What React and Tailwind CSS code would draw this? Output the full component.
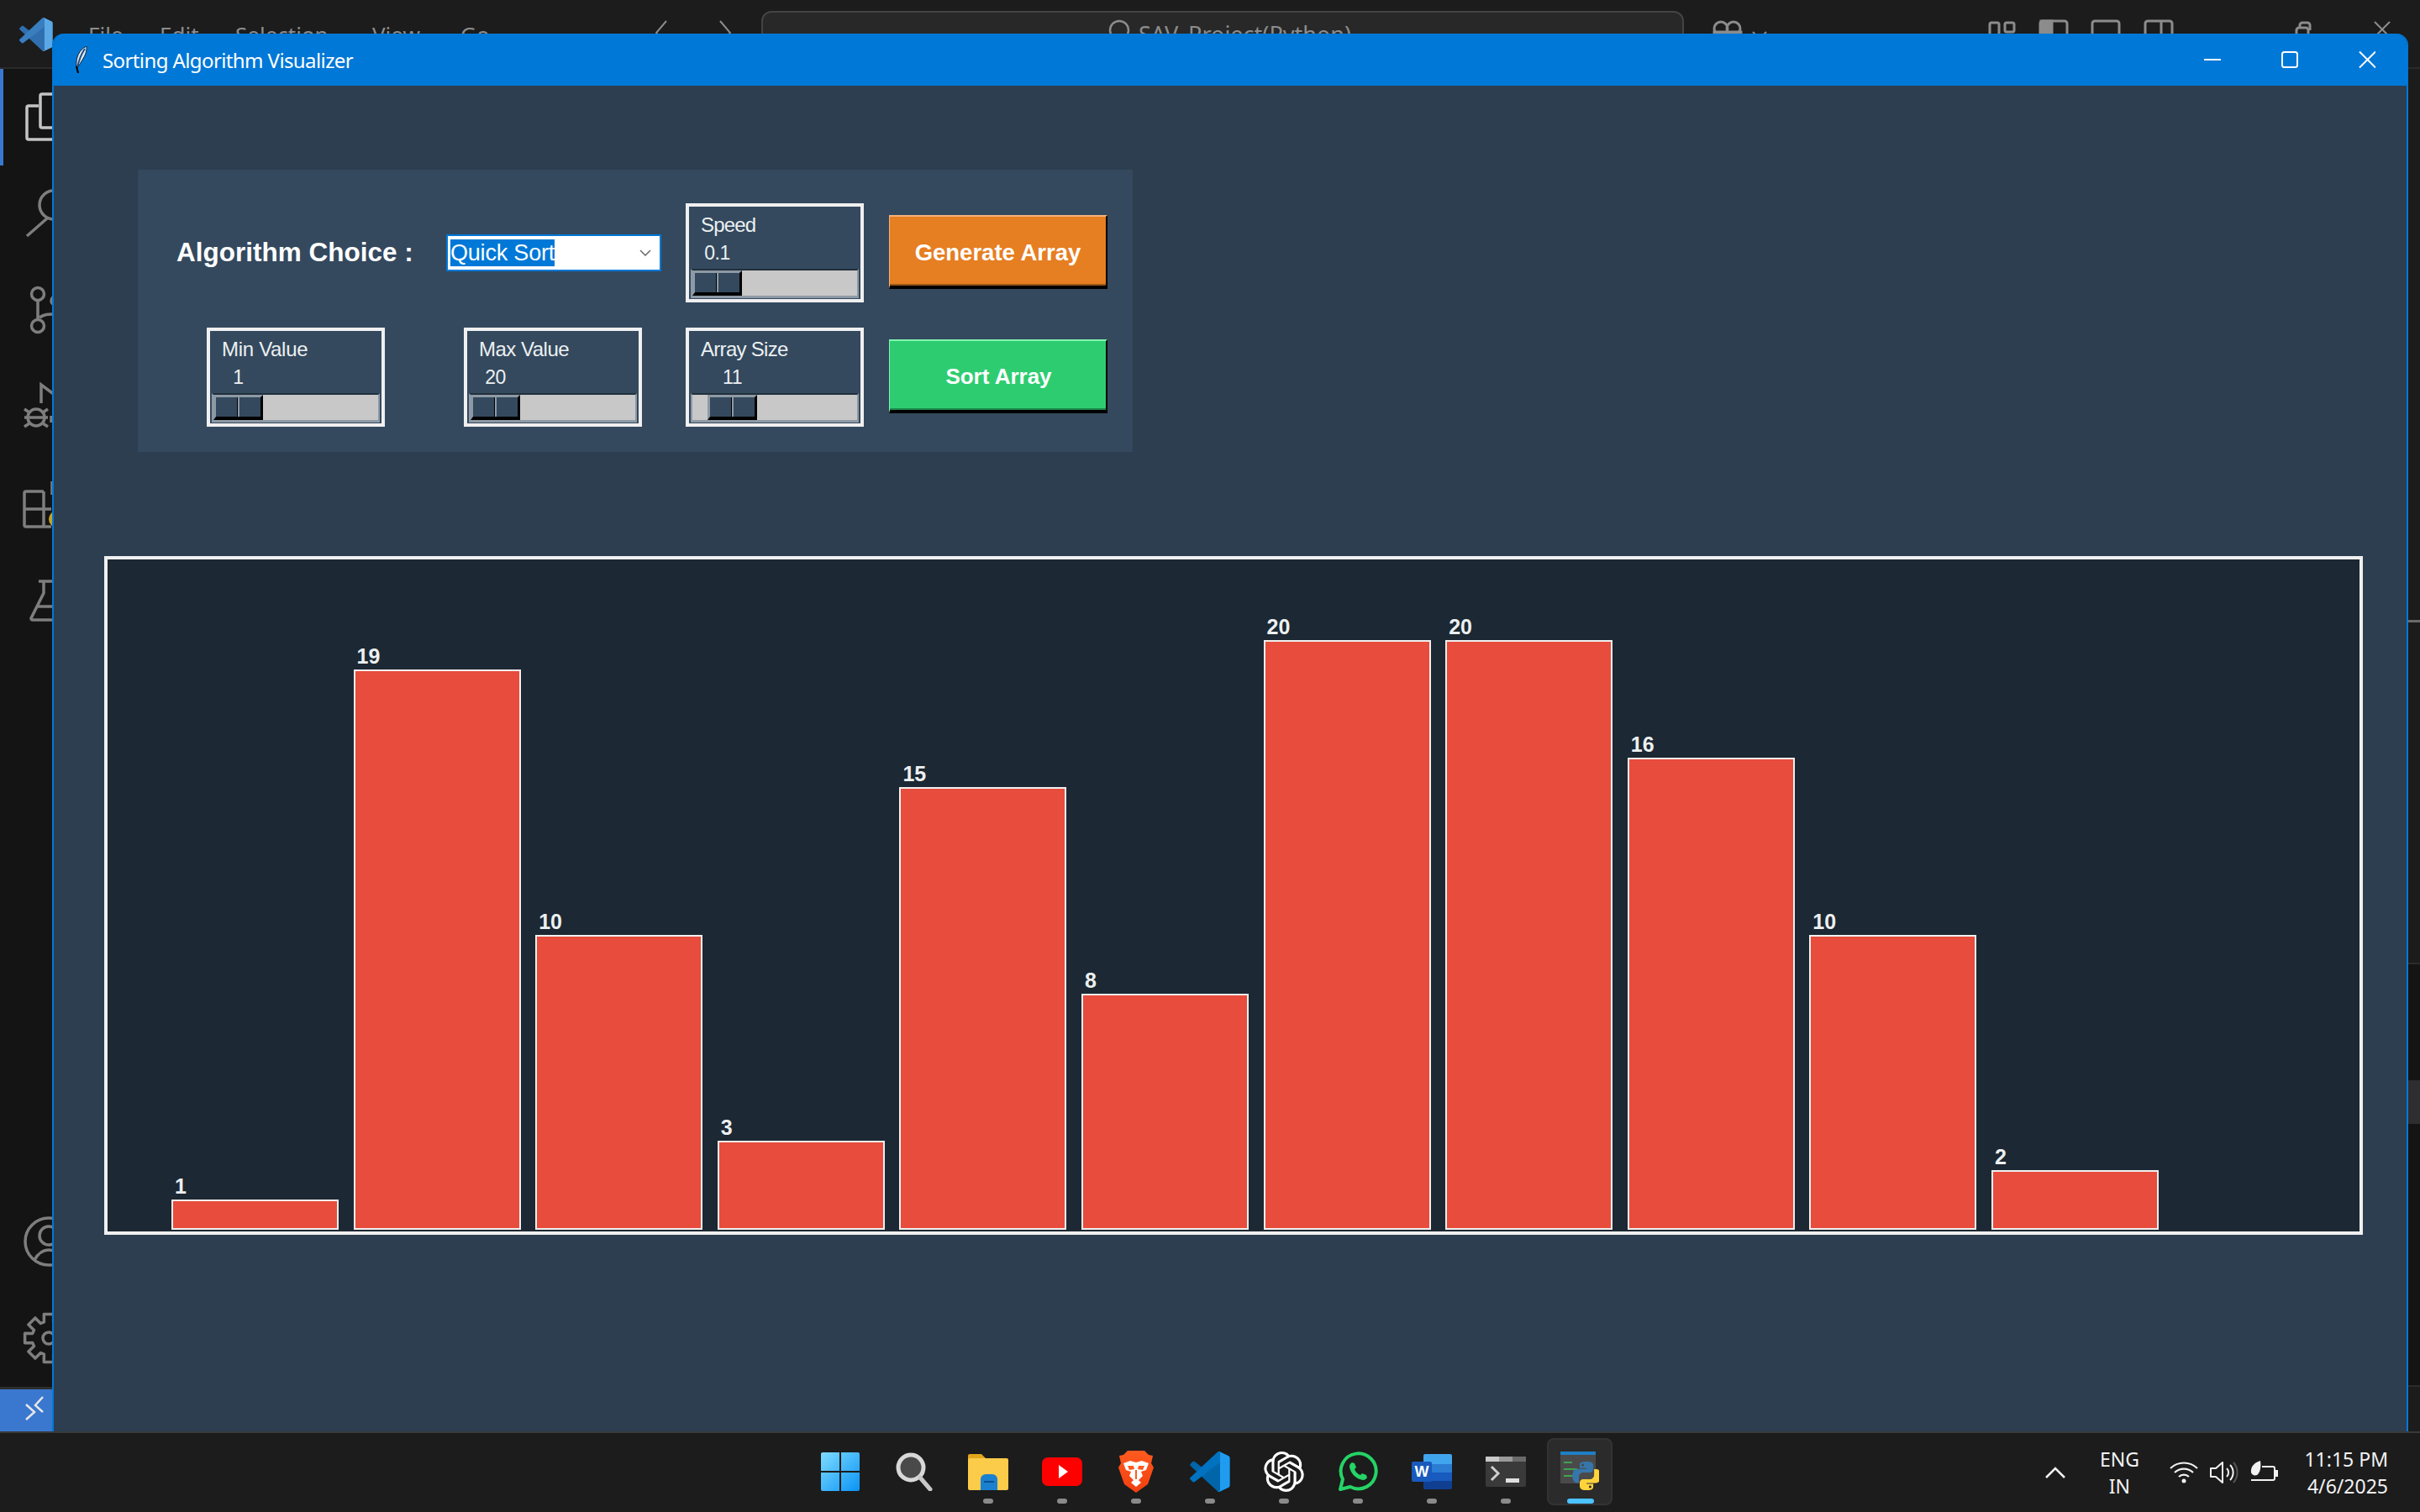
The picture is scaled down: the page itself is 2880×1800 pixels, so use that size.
import React from "react";
import { SiOpenai } from "react-icons/si";

const sans = "font-['Liberation_Sans',Arial,sans-serif]";
const ui = "font-['Noto_Sans','Open_Sans',sans-serif]";

function gearPoints(cx, cy, ro, ri, n) {
  const pts = [];
  for (let i = 0; i < n; i++) {
    const a = (i / n) * Math.PI * 2 - Math.PI / 2;
    const w = (Math.PI / n) * 0.5;
    const g = (Math.PI / n) * 0.72;
    [[-g, ri], [-w, ro], [w, ro], [g, ri]].forEach(([d, r]) => {
      pts.push(`${(cx + r * Math.cos(a + d)).toFixed(1)},${(cy + r * Math.sin(a + d)).toFixed(1)}`);
    });
  }
  return pts.join(" ");
}

function VsLogo({ className, a = "#0065A9", b = "#007ACC", c = "#1F9CF0" }) {
  return (
    <svg viewBox="0 0 100 100" className={className}>
      <path fill={a} d="M96 11 75 1a6 6 0 0 0-7 1L29 38 12 25a4 4 0 0 0-5 0l-5 5a4 4 0 0 0 0 6l15 14L2 64a4 4 0 0 0 0 6l5 5a4 4 0 0 0 5 0l17-13 39 36a6 6 0 0 0 7 1l21-10a6 6 0 0 0 3-5V16a6 6 0 0 0-3-5ZM75 27 45 50l30 23Z" />
      <path fill={b} d="M7 75 2 70a4 4 0 0 1 0-6L68 2a6 6 0 0 1 7 3v22L12 75a4 4 0 0 1-5 0Z" opacity=".65" />
      <path fill={c} d="M75 99a6 6 0 0 1-7-1c2 2 7 1 7-3V5c0-4-5-5-7-3a6 6 0 0 1 7-1l21 10a6 6 0 0 1 3 5v68a6 6 0 0 1-3 5Z" />
    </svg>
  );
}

function TopBar() {
  const items = [
    ["File", "w-[42px] mr-[43px]"],
    ["Edit", "w-[55px] mr-[35px]"],
    ["Selection", "w-[122px] mr-[41px]"],
    ["View", "w-[65px] mr-[40px]"],
    ["Go", "w-[34px] mr-[55px]"],
    ["...", "w-[28px] mr-[115px]"],
  ];
  return (
    <div className={`grid grid-cols-[906px_1098px_1fr] h-[82px] shrink-0 bg-[#1c1c1c] border-b-2 border-[#2a2a2a] text-[#8c8c8c] text-[26px] leading-[36px] ${ui}`}>
      <div className="flex items-start">
        <VsLogo className="w-[40px] h-[40px] ml-[23px] mt-[21px] mr-[42px]" a="#2f6fb0" b="#3f86c8" c="#5aa9e6" />
        {items.map(([t, c]) => (
          <span key={t} className={`${c} mt-[23px] whitespace-nowrap`}>{t}</span>
        ))}
        <svg viewBox="0 0 90 30" className="w-[90px] h-[30px] mt-[24px]" fill="none" stroke="#8c8c8c" strokeWidth="2">
          <path d="M13 1 1 15l12 14M77 1l12 14-12 14" />
        </svg>
      </div>
      <div className="h-[60px] mt-[13px] bg-[#282828] border-2 border-[#444] rounded-[12px] flex items-start justify-center">
        <svg viewBox="0 0 28 40" className="w-[28px] h-[40px] mt-[8px] ml-[16px] mr-[9px]" fill="none" stroke="#8c8c8c" strokeWidth="2.5">
          <circle cx="14" cy="13" r="11" />
          <path d="M7 22 1 30" />
        </svg>
        <span className="mt-[8px] whitespace-nowrap text-[27px]">SAV_Project(Python)</span>
      </div>
      <svg viewBox="2004 0 876 80" className="w-[876px] h-[80px]" fill="none" stroke="#8c8c8c" strokeWidth="3">
        <circle cx="2048" cy="34" r="8" />
        <circle cx="2063" cy="34" r="8" />
        <rect x="2040" y="38" width="32" height="12" fill="#8c8c8c" />
        <path d="M2086 38l8 8 8-8" strokeWidth="2" />
        <rect x="2368" y="27" width="11" height="24" rx="2" />
        <rect x="2386" y="27" width="11" height="11" rx="2" />
        <rect x="2428" y="25" width="32" height="24" rx="3" />
        <rect x="2429" y="25" width="13" height="24" fill="#8c8c8c" />
        <rect x="2490" y="25" width="32" height="24" rx="3" />
        <rect x="2553" y="25" width="32" height="24" rx="3" />
        <path d="M2572 25v24" />
        <rect x="2733" y="33" width="14" height="14" rx="3" />
        <path d="M2737 33v-3a3 3 0 0 1 3-3h6a3 3 0 0 1 3 3v6" />
        <path d="M2826 26l18 18M2844 26l-18 18" strokeWidth="2" />
      </svg>
    </div>
  );
}

function ActivityBar() {
  const g = "#7e7e7e";
  return (
    <div className="w-[62px] shrink-0 bg-[#141414] flex flex-col">
      <div className="h-[115px] shadow-[inset_4px_0_0_#3a78d0]">
        <svg viewBox="0 84 62 115" className="w-[62px] h-[115px]" fill="none" stroke="#c4c4c4" strokeWidth="3.5">
          <path d="M46 128H34a2 2 0 0 0-2 2v36a2 2 0 0 0 2 2h28" />
          <path d="M62 114H50a2 2 0 0 0-2 2v36a2 2 0 0 0 2 2h14" />
        </svg>
      </div>
      <svg viewBox="0 199 62 115" className="w-[62px] h-[115px] shrink-0" fill="none" stroke={g} strokeWidth="3.5">
        <circle cx="64" cy="246" r="17" />
        <path d="M32 283 56 262" />
      </svg>
      <svg viewBox="0 314 62 115" className="w-[62px] h-[115px] shrink-0" fill="none" stroke={g} strokeWidth="3.5">
        <circle cx="45" cy="352" r="7.5" />
        <circle cx="45" cy="390" r="7.5" />
        <path d="M45 360v22M47 380c6-4 10-4 17-4" />
        <circle cx="66" cy="360" r="5" />
      </svg>
      <svg viewBox="0 429 62 115" className="w-[62px] h-[115px] shrink-0" fill="none" stroke={g} strokeWidth="3.5">
        <path d="M49 482v-22l16 12" />
        <circle cx="43" cy="499" r="10" />
        <path d="M33 499h20M29 489l6 4M29 510l6-4M57 489l-6 4M57 510l-6-4M29 499h4M53 499h4" />
        <path d="M61 497v8" />
      </svg>
      <svg viewBox="0 544 62 115" className="w-[62px] h-[115px] shrink-0" fill="none" stroke={g} strokeWidth="3.5">
        <path d="M52 587H31a2 2 0 0 0-2 2v38a2 2 0 0 0 2 2h30M29 608h32M52 587v42" />
        <circle cx="68" cy="620" r="10" fill="#c9a227" stroke="none" />
        <path d="M62 575v16" />
      </svg>
      <svg viewBox="0 659 62 115" className="w-[62px] h-[115px] shrink-0" fill="none" stroke={g} strokeWidth="3.5">
        <path d="M46 694h20M52 694v14L37 738a2 2 0 0 0 2 2h26M44 724h20" />
      </svg>
      <svg viewBox="0 1420 62 115" className="w-[62px] h-[115px] shrink-0 mt-auto" fill="none" stroke={g} strokeWidth="3.5">
        <circle cx="58" cy="1478" r="28" />
        <circle cx="58" cy="1471" r="11" />
        <path d="M41 1500c5-9 11-12 17-12s12 3 17 12" />
      </svg>
      <svg viewBox="0 1535 62 115" className="w-[62px] h-[115px] shrink-0" fill="none" stroke={g} strokeWidth="3.5">
        <polygon points={gearPoints(58, 1593, 29, 20, 8)} strokeLinejoin="round" />
        <circle cx="58" cy="1593" r="7" />
      </svg>
      <div className="h-[3px] bg-[#2e2e2e] mt-[1px]" />
      <div className="h-[50px] shrink-0 bg-[#3a78d0] flex items-center justify-center">
        <svg viewBox="0 0 62 50" className="w-[62px] h-[50px]" fill="none" stroke="#e6e6e6" strokeWidth="2.5">
          <path d="M31 18l10 9-10 9M51 9 42 19l9 8" />
        </svg>
      </div>
    </div>
  );
}

function BackStrip() {
  return (
    <div className="flex-1 flex flex-col items-end">
      <div className="w-[14px] h-[659px] bg-[#1c1c1c] border-b-[3px] border-[#6a6a6a]" />
      <div className="w-[14px] h-[407px] bg-[#1c1c1c] border-b-2 border-[#2c2c2c]" />
      <div className="w-[14px] h-[138px] bg-[#141414]" />
      <div className="w-[14px] h-[52px] bg-[#2e2e30]" />
      <div className="w-[14px] h-[313px] bg-[#141414] border-b-2 border-[#2c2c2c]" />
      <div className="w-[14px] flex-1 bg-[#1c1c1c]" />
    </div>
  );
}

function Slider({ label, value, track, labelClass }) {
  return (
    <div className={`w-[212px] h-[118px] shrink-0 border-4 border-[#f0f0f0] flex flex-col text-[#ecf0f1] ${sans}`}>
      <div className={`h-[32px] mt-[6px] pl-[14px] text-[24px] leading-[32px] whitespace-nowrap ${labelClass}`}>{label}</div>
      <div className="h-[34px] ml-[4px] text-[23px] leading-[34px] tracking-[-0.5px]">
        <div className={`w-[59px] text-center ${track}`}>{value}</div>
      </div>
      <div className="h-[35px] mx-[2px] mt-[2px] bg-[#c8c8c8] border-t-2 border-t-[#22303c] border-x-2 border-x-[#8d9aa6] border-b-[3px] border-b-[#8d9aa6]">
        <div className={`h-[30px] w-[59px] flex bg-[#34495e] border-t-[3px] border-l-[3px] border-t-[#8d9aa6] border-l-[#8d9aa6] border-b-4 border-r-[3px] border-b-black border-r-black ${track}`}>
          <div className="w-[26px] border-r-[1px] border-black" />
          <div className="w-[2px] bg-[#8d9aa6]" />
        </div>
      </div>
    </div>
  );
}

function ActionButton({ children, className }) {
  return (
    <button className={`w-[260px] h-[88px] shrink-0 ml-[30px] mb-[2px] flex items-center justify-center text-white font-bold ${sans} ${className}`}>
      {children}
    </button>
  );
}

function Controls() {
  return (
    <div className="w-[1184px] h-[336px] mt-[100px] ml-[100px] bg-[#34495e] pt-[40px] flex flex-col gap-[30px]">
      <div className="flex items-center">
        <div className={`w-[321px] ml-[46px] text-[31.5px] font-bold leading-none text-white whitespace-nowrap ${sans}`}>Algorithm Choice :</div>
        <div className={`w-[256px] h-[44px] mr-[29px] bg-white border-2 border-[#0078d7] flex items-center pl-[3px] relative ${sans}`}>
          <span className="w-[124px] h-[32px] bg-[#0078d7] text-white text-[27px] leading-[32px] whitespace-nowrap tracking-[-0.2px] overflow-hidden">Quick Sort</span>
          <svg viewBox="0 0 14 8" className="w-[14px] h-[8px] ml-auto mr-[10px]" fill="none" stroke="#6a6a6a" strokeWidth="1.5">
            <path d="M1 1l6 6 6-6" />
          </svg>
        </div>
        <Slider label="Speed" value="0.1" track="ml-0" labelClass="tracking-[-0.8px]" />
        <ActionButton className="text-[27.5px] pt-[4px] bg-[#e67e22] border-t-2 border-l border-t-[#f5b27a] border-l-[#f5b27a] border-r-2 border-b-[4px] border-r-black border-b-black shadow-[inset_0_-2px_0_#9c5516]">
          Generate Array
        </ActionButton>
      </div>
      <div className="flex items-center">
        <div className="ml-[82px]">
          <Slider label="Min Value" value="1" track="ml-0" labelClass="tracking-[-0.3px]" />
        </div>
        <div className="ml-[94px]">
          <Slider label="Max Value" value="20" track="ml-0" labelClass="tracking-[-0.5px]" />
        </div>
        <div className="ml-[52px]">
          <Slider label="Array Size" value="11" track="ml-[18px]" labelClass="tracking-[-0.7px]" />
        </div>
        <ActionButton className="text-[26px] pl-[2px] pt-[2px] bg-[#2ecc71] border-t-2 border-l border-t-[#82f5b0] border-l-[#82f5b0] border-r-2 border-b-[4px] border-r-black border-b-black shadow-[inset_0_-2px_0_#1b8a4a]">
          Sort Array
        </ActionButton>
      </div>
    </div>
  );
}

function Chart() {
  const data = [1, 19, 10, 3, 15, 8, 20, 20, 16, 10, 2];
  return (
    <div className={`w-[2688px] h-[808px] mt-[124px] ml-[60px] border-4 border-[#f0f0f0] bg-[#1c2833] flex items-end gap-[17.6px] pl-[76px] pb-[2px] ${sans}`}>
      {data.map((v, i) => (
        <div key={i} className="w-[199px] shrink-0 flex flex-col">
          <div className="h-[28px] mb-[2px] pl-[4px] text-[25px] font-bold leading-[28px] text-[#ecf0f1]">{v}</div>
          <div className="bg-[#e74c3c] border-2 border-[#f0f0f0]" style={{ height: `${v * 35.05 + 1}px` }} />
        </div>
      ))}
    </div>
  );
}

function AppWindow() {
  return (
    <div className="absolute left-[62px] top-[40px] w-[2804px] h-[1664px] flex flex-col rounded-t-[14px] overflow-hidden border-x-2 border-[#0078d7] bg-[#2c3e50]">
      <div className={`h-[62px] shrink-0 bg-[#0078d7] flex items-center text-white ${ui}`}>
        <svg viewBox="0 0 18 32" className="w-[18px] h-[32px] ml-[23px] mr-[17px]">
          <path d="M16 0C7 4 3 14 4 24l3-1c4-7 10-14 9-23Z" fill="#dce9f5" stroke="#123" strokeWidth="1" />
          <path d="M14 3C10 9 7 15 5 26" stroke="#1c4b82" strokeWidth="2" fill="none" />
          <path d="M4 24l2 8" stroke="#000" strokeWidth="2" />
        </svg>
        <span className="text-[24px] pt-[2px] tracking-[-0.6px] whitespace-nowrap">Sorting Algorithm Visualizer</span>
        <svg viewBox="2623 60 204 20" className="w-[204px] h-[20px] ml-auto mr-[37px]" fill="none" stroke="#fff" strokeWidth="2">
          <path d="M2623 70h20" />
          <rect x="2716" y="61" width="18" height="18" rx="2.5" />
          <path d="M2808 60.5l19 19M2827 60.5l-19 19" />
        </svg>
      </div>
      <Controls />
      <Chart />
    </div>
  );
}

const tile = "w-[88px] h-[80px] relative flex items-center justify-center shrink-0";
const dot = "absolute left-[38px] bottom-[2px] w-[12px] h-[6px] rounded-full bg-[#8a8a8a]";

function Dock() {
  return (
    <div className="flex items-center ml-[956px] mt-[6px]">
      <div className={tile}>
        <svg viewBox="0 0 46 46" className="w-[46px] h-[46px]">
          <defs>
            <linearGradient id="win" x1="0" y1="0" x2="1" y2="1">
              <stop offset="0" stopColor="#7fdcff" />
              <stop offset="1" stopColor="#0a93f5" />
            </linearGradient>
          </defs>
          <path fill="url(#win)" d="M2 0h20v22H0V2a2 2 0 0 1 2-2Zm22 0h20a2 2 0 0 1 2 2v20H24ZM0 24h22v22H2a2 2 0 0 1-2-2Zm24 0h22v20a2 2 0 0 1-2 2H24Z" />
        </svg>
      </div>
      <div className={tile}>
        <svg viewBox="0 0 44 46" className="w-[44px] h-[46px]">
          <circle cx="18" cy="18" r="15" fill="#4a4a4a" stroke="#d8d8d8" strokeWidth="5" />
          <path d="M29 30 41 44" stroke="#c8c8c8" strokeWidth="5" strokeLinecap="round" />
        </svg>
      </div>
      <div className={tile}>
        <svg viewBox="0 0 48 44" className="w-[48px] h-[44px]">
          <path fill="#e2a61c" d="M0 3a2 2 0 0 1 2-2h14l5 5h20v10H0Z" />
          <rect y="6" width="48" height="38" rx="2" fill="#fbcb4a" />
          <path fill="#1a80d0" d="M15 44V31a6 6 0 0 1 6-6h8a6 6 0 0 1 6 6v13Z" />
          <rect x="19" y="33" width="12" height="2" fill="#0b4f8c" />
        </svg>
        <div className={dot} />
      </div>
      <div className={tile}>
        <svg viewBox="0 0 48 34" className="w-[48px] h-[34px]">
          <rect width="48" height="34" rx="7" fill="#ff0000" />
          <path d="M20 9 31 17 20 25Z" fill="#fff" />
        </svg>
        <div className={dot} />
      </div>
      <div className={tile}>
        <svg viewBox="0 0 42 50" className="w-[42px] h-[50px]">
          <defs>
            <linearGradient id="brave" x1="0" y1="0" x2="0" y2="1">
              <stop offset="0" stopColor="#ff5a1f" />
              <stop offset="1" stopColor="#f0400f" />
            </linearGradient>
          </defs>
          <path fill="url(#brave)" d="M11 0h20l5 5 5 1-2 9 3 5-7 20-14 10-14-10L0 20l3-5-2-9 5-1Z" />
          <path fill="#fff" d="M6 15l8-3 7 2 7-2 8 3-3 8-6 2 2 5-5 5 3 3-6 5-6-5 3-3-5-5 2-5-6-2Z" />
          <path fill="#ff5a1f" d="M11 18h7l1 4-6 1ZM24 18h7l-2 5-6-1ZM20 23h2v11h-2Z" />
        </svg>
        <div className={dot} />
      </div>
      <div className={tile}>
        <VsLogo className="w-[48px] h-[48px]" />
        <div className={dot} />
      </div>
      <div className={tile}>
        <SiOpenai className="w-[48px] h-[48px] text-white" />
        <div className={dot} />
      </div>
      <div className={tile}>
        <svg viewBox="0 0 48 48" className="w-[48px] h-[48px]" fill="none">
          <path d="M3 45 6 33A21 21 0 1 1 15 42Z" stroke="#25d366" strokeWidth="4" strokeLinejoin="round" />
          <path d="M17 13c-2 1-3 3-3 5 1 8 8 15 16 16 2 0 4-1 5-3l-1-3-5-2-2 2c-3-1-6-4-7-7l2-2-2-5Z" fill="#25d366" />
        </svg>
        <div className={dot} />
      </div>
      <div className={tile}>
        <svg viewBox="0 0 48 42" className="w-[48px] h-[42px]">
          <path fill="#41a5ee" d="M14 2a2 2 0 0 1 2-2h30a2 2 0 0 1 2 2v10H14Z" />
          <rect x="14" y="12" width="34" height="10" fill="#2b7cd3" />
          <rect x="14" y="22" width="34" height="10" fill="#185abd" />
          <path fill="#103f91" d="M14 32h34v8a2 2 0 0 1-2 2H16a2 2 0 0 1-2-2Z" />
          <rect y="9" width="24" height="24" rx="2" fill="#185abd" />
          <text x="12" y="27" textAnchor="middle" fontSize="18" fontWeight="700" fill="#fff" fontFamily="Liberation Sans, sans-serif">W</text>
        </svg>
        <div className={dot} />
      </div>
      <div className={tile}>
        <svg viewBox="0 0 48 36" className="w-[48px] h-[36px]">
          <rect width="48" height="36" rx="2" fill="#3a3a3a" />
          <rect width="16" height="6" fill="#c9c9c9" />
          <rect x="16" width="16" height="6" fill="#9a9a9a" />
          <rect x="32" width="16" height="6" fill="#6a6a6a" />
          <path d="M7 12l8 8-8 8" fill="none" stroke="#cfcfcf" strokeWidth="3" />
          <rect x="24" y="26" width="16" height="5" fill="#e0e0e0" />
        </svg>
        <div className={dot} />
      </div>
      <div className="w-[78px] h-[80px] ml-[5px] relative flex items-center justify-center shrink-0 bg-[#2b2b2b] border-2 border-[#333] rounded-[8px]">
        <svg viewBox="0 0 46 46" className="w-[46px] h-[46px] mb-[2px]">
          <rect width="42" height="38" fill="#4a4a4a" />
          <rect width="42" height="4" fill="#1f7fc4" />
          <rect x="4" y="12" width="10" height="2" fill="#3fa34d" />
          <rect x="4" y="20" width="16" height="2" fill="#3fa34d" />
          <rect x="4" y="28" width="12" height="2" fill="#3fa34d" />
          <g transform="translate(14 12) scale(0.31)">
            <path fill="#3776ab" d="M54.9 0C50.3 0 46 .4 42.2 1.1 31 3.1 29 7.2 29 14.8v10h26v3.3H19.2c-7.6 0-14.2 4.5-16.3 13.2-2.4 10-2.5 16.2 0 26.6 1.9 7.8 6.3 13.3 13.9 13.3h8.9V58.2c0-8.6 7.5-16.3 16.3-16.3h26c7.2 0 13-6 13-13.2V14.8c0-7.1-6-12.4-13-13.6C63.5.4 59 0 54.9 0ZM40.8 8c2.7 0 4.9 2.2 4.9 5 0 2.7-2.2 4.9-4.9 4.9s-4.9-2.2-4.9-4.9c0-2.8 2.2-5 4.9-5Z" />
            <path fill="#ffd43b" transform="rotate(180 55 55)" d="M54.9 0C50.3 0 46 .4 42.2 1.1 31 3.1 29 7.2 29 14.8v10h26v3.3H19.2c-7.6 0-14.2 4.5-16.3 13.2-2.4 10-2.5 16.2 0 26.6 1.9 7.8 6.3 13.3 13.9 13.3h8.9V58.2c0-8.6 7.5-16.3 16.3-16.3h26c7.2 0 13-6 13-13.2V14.8c0-7.1-6-12.4-13-13.6C63.5.4 59 0 54.9 0ZM40.8 8c2.7 0 4.9 2.2 4.9 5 0 2.7-2.2 4.9-4.9 4.9s-4.9-2.2-4.9-4.9c0-2.8 2.2-5 4.9-5Z" />
          </g>
        </svg>
        <div className="absolute left-[22px] bottom-[0px] w-[32px] h-[6px] rounded-full bg-[#4cc2ff]" />
      </div>
    </div>
  );
}

function Tray() {
  return (
    <div className={`ml-auto flex items-center text-[#f2f2f2] text-[23px] leading-[32px] mr-[38px] ${ui}`}>
      <svg viewBox="0 0 24 14" className="w-[24px] h-[14px] mr-[34px]" fill="none" stroke="#f2f2f2" strokeWidth="2.5">
        <path d="M1 13 12 2l11 11" />
      </svg>
      <div className="w-[60px] flex flex-col items-center mr-[30px]">
        <span>ENG</span>
        <span>IN</span>
      </div>
      <svg viewBox="0 0 34 26" className="w-[34px] h-[26px] mr-[14px]" fill="none" stroke="#f2f2f2" strokeWidth="2.2">
        <path d="M1 8a23 23 0 0 1 32 0M6 13a16 16 0 0 1 22 0M11 18a9 9 0 0 1 12 0" />
        <circle cx="17" cy="23" r="2.5" fill="#f2f2f2" stroke="none" />
      </svg>
      <svg viewBox="0 0 34 28" className="w-[34px] h-[28px] mr-[14px]" fill="none" stroke="#f2f2f2" strokeWidth="2">
        <path d="M1 9h6l8-7v24l-8-7H1Z" strokeLinejoin="round" />
        <path d="M20 9a7 7 0 0 1 0 10M24 5a13 13 0 0 1 0 18" />
        <path d="M28 2a18 18 0 0 1 0 24" stroke="#555" />
      </svg>
      <svg viewBox="0 0 34 28" className="w-[34px] h-[28px] mr-[30px]" fill="none" stroke="#f2f2f2" strokeWidth="2">
        <path d="M14 7h13a2 2 0 0 1 2 2v12a2 2 0 0 1-2 2H1" />
        <path d="M29 12h3v6h-3" fill="#f2f2f2" />
        <path d="M12 0C5 2 0 7 1 14c1 3 4 4 7 3 4-3 5-10 4-17Z" fill="#f2f2f2" stroke="none" />
      </svg>
      <div className="flex flex-col items-end text-[23px]">
        <span className="whitespace-nowrap">11:15 PM</span>
        <span className="whitespace-nowrap">4/6/2025</span>
      </div>
    </div>
  );
}

export default function App() {
  return (
    <div className="relative w-[2880px] h-[1800px] overflow-hidden flex flex-col bg-[#1c1c1c]">
      <TopBar />
      <div className="flex flex-1 min-h-0">
        <ActivityBar />
        <BackStrip />
      </div>
      <div className="h-[96px] shrink-0 bg-[#1c1c1c] border-t-2 border-[#3a3a3a] flex items-start">
        <Dock />
        <div className="flex-1 h-full flex items-center">
          <Tray />
        </div>
      </div>
      <AppWindow />
    </div>
  );
}
